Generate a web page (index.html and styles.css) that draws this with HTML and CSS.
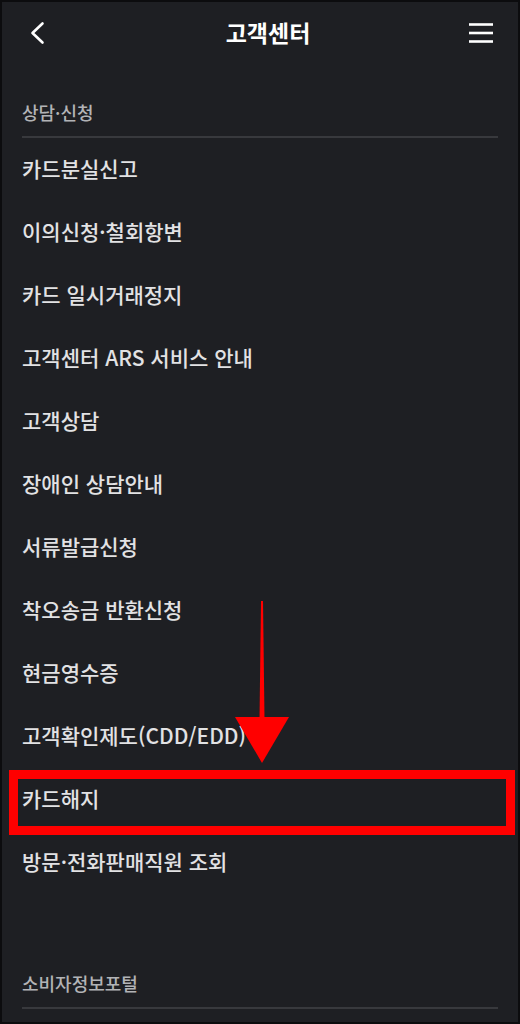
FILE: index.html
```html
<!DOCTYPE html>
<html lang="ko">
<head>
<meta charset="utf-8">
<title>고객센터</title>
<link rel="stylesheet" href="styles.css">
</head>
<body>
<div class="screen">
  <header class="topbar">
    <svg class="icon back" width="24" height="24" viewBox="0 0 24 24"><polyline points="16.5,2.5 6.5,12 16.5,21.5" fill="none" stroke="#fff" stroke-width="2.6" stroke-linecap="round" stroke-linejoin="round"/></svg>
    <h1 class="title">고객센터</h1>
    <svg class="icon menu" width="26" height="24" viewBox="0 0 26 24"><g stroke="#fff" stroke-width="2.6" stroke-linecap="butt"><line x1="1" y1="3.5" x2="25" y2="3.5"/><line x1="1" y1="12" x2="25" y2="12"/><line x1="1" y1="20.5" x2="25" y2="20.5"/></g></svg>
  </header>

  <section class="group">
    <h2 class="group-title">상담·신청</h2>
    <ul class="list">
      <li class="item">카드분실신고</li>
      <li class="item">이의신청·철회항변</li>
      <li class="item">카드 일시거래정지</li>
      <li class="item">고객센터 ARS 서비스 안내</li>
      <li class="item">고객상담</li>
      <li class="item">장애인 상담안내</li>
      <li class="item">서류발급신청</li>
      <li class="item">착오송금 반환신청</li>
      <li class="item">현금영수증</li>
      <li class="item">고객확인제도(CDD/EDD)</li>
      <li class="item">카드해지</li>
      <li class="item">방문·전화판매직원 조회</li>
    </ul>
  </section>

  <section class="group group-second">
    <h2 class="group-title">소비자정보포털</h2>
  </section>

  <div class="highlight"></div>
  <svg class="arrow" width="60" height="170" viewBox="0 0 60 170">
    <polygon points="29,0 31,0 32.5,118 27.5,118" fill="#ff0000"/>
    <polygon points="3,116 57,116 30,162" fill="#ff0000"/>
  </svg>
</div>
</body>
</html>
```

FILE: styles.css
```css
* { box-sizing: border-box; }
html, body { margin: 0; padding: 0; background: #1e1f23; }
body {
  font-family: "Noto Sans CJK KR", "Noto Sans", sans-serif;
}
.screen {
  position: relative;
  width: 520px;
  height: 1024px;
  background: #1e1f23;
  border: 2px solid #0c0c0e;
  overflow: hidden;
}
.topbar {
  height: 64px;
  display: flex;
  align-items: center;
  justify-content: space-between;
  padding: 0 24px 2px 24px;
}
.icon { display: block; }
.title {
  margin: 0 0 0 18px;
  font-size: 23px;
  font-weight: 700;
  color: #ffffff;
  line-height: 1;
  padding-bottom: 2px;
}
.group { padding: 0 20px; }
.group-title {
  margin: 0;
  padding: 34px 0 12px;
  font-size: 18px;
  font-weight: 500;
  color: #b2b3b6;
  line-height: 24px;
  border-bottom: 2px solid #38393d;
}
.list { list-style: none; margin: 0; padding: 0; }
.item {
  height: 63px;
  display: flex;
  align-items: center;
  padding-bottom: 3px;
  font-size: 21px;
  font-weight: 500;
  color: #e2e2e4;
}
.group-second .group-title {
  padding-top: 77px;
  padding-bottom: 12px;
}
.highlight {
  position: absolute;
  left: 7px;
  top: 768px;
  width: 506px;
  height: 65px;
  border: 9px solid #ff0000;
}
.arrow {
  position: absolute;
  left: 230px;
  top: 599px;
}
```
